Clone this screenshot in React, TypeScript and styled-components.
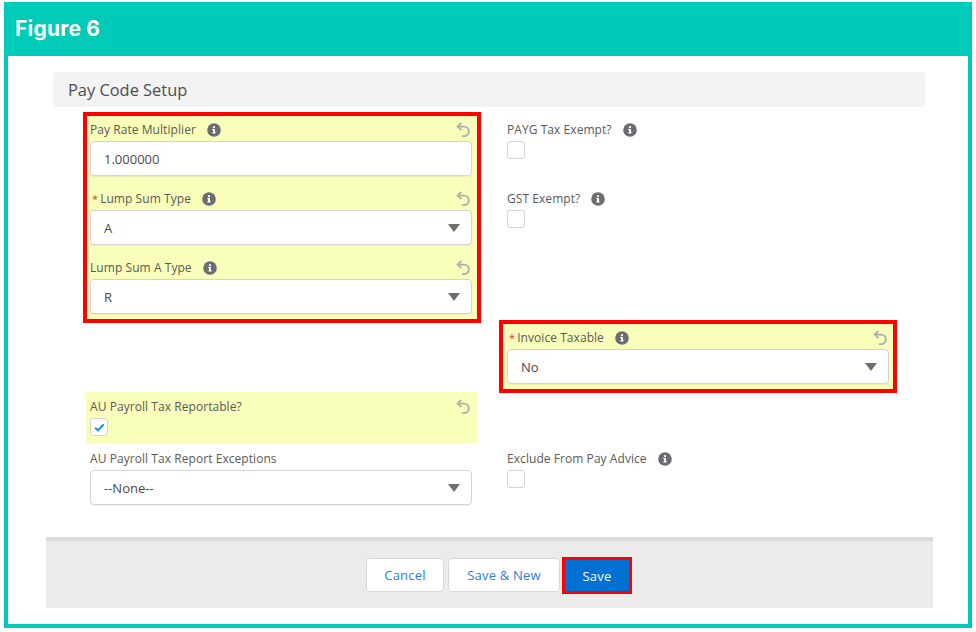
import styled, { createGlobalStyle } from 'styled-components'

const GlobalStyle = createGlobalStyle`
  html, body { margin: 0; padding: 0; background: #fff; }
  body { font-family: "Open Sans", "Liberation Sans", sans-serif; }
`

const Frame = styled.main`
  box-sizing: border-box;
  width: 968px; height: 626px;
  margin: 2px 0 0 4px;
  border: 4px solid #00cbb9;
  background: #fff;
`

const Banner = styled.header`
  box-sizing: border-box;
  height: 50px; padding: 0 0 6px 7px;
  display: flex; align-items: center;
  background: #00cbb9; color: #fff;
  font-family: Inter, "Liberation Sans", sans-serif;
  font-size: 21px; font-weight: 700; letter-spacing: 0.2px;
`

const SectionTitle = styled.h2`
  box-sizing: border-box;
  height: 35px; margin: 16px 43px 0 45px; padding: 0 15px;
  display: flex; align-items: center;
  background: #f3f3f3; border-radius: 4px;
  color: #4e4e4c; font-size: 16.4px; font-weight: 400;
`

const Columns = styled.div`
  display: flex; gap: 18px;
  margin: 5px 0 0 75px;
  height: 425px;
`

const Column = styled.div`
  width: 398px; flex: none;
  display: flex; flex-direction: column;
`

const RedBox = styled.section<{ $top?: number; $left: number; $right: number }>`
  box-sizing: border-box;
  margin-top: ${p => p.$top ?? 0}px;
  padding: 0 ${p => p.$right}px 5px ${p => p.$left}px;
  display: flex; flex-direction: column; gap: 9px;
  border: 4px solid #f00;
  background: #f9feba;
`

const Changed = styled.section`
  margin: 69px 4px 0 3px; padding: 0 5px 0 4px;
  height: 52px;
  background: #f9feba;
`

const Field = styled.div<{ $top?: number; $left?: number; $right?: number }>`
  margin-top: ${p => p.$top ?? 0}px;
  padding: 0 ${p => p.$right ?? 0}px 0 ${p => p.$left ?? 0}px;
`

const LabelRow = styled.div`
  box-sizing: border-box;
  height: 26px; padding-top: 3px;
  display: flex; align-items: center; gap: 11px;
  color: #5a5a58;
  font-size: 12px; line-height: 22px; letter-spacing: 0.06px;
`

const TightRow = styled(LabelRow)`
  height: 25px;
`

const Required = styled.span`
  color: #e8342c; margin: 0 2px; font-size: 11px;
`

const LabelText = styled.span`
  white-space: nowrap;
`

const UndoSlot = styled.span`
  margin-left: auto; margin-right: 2px;
  display: flex;
`

const Control = styled.div`
  box-sizing: border-box;
  height: 35px; padding: 0 11px 0 13px;
  display: flex; align-items: center; justify-content: space-between;
  background: #fff;
  border: 1px solid #d4d4d2; border-radius: 4px;
  box-shadow: 0 1px 1px rgba(0, 0, 0, 0.06);
  color: #4a4a48; font-size: 13px;
`

const Check = styled.span`
  box-sizing: border-box;
  width: 18px; height: 18px;
  display: flex; align-items: center; justify-content: center;
  background: #fff;
  border: 1px solid #d4d4d2; border-radius: 3px;
`

const Footer = styled.footer`
  box-sizing: border-box;
  height: 71px; margin: 0 35px 0 38px; padding: 17px 0 0 19px;
  display: flex; justify-content: center; align-items: flex-start;
  background: #ecebea;
  border-top: 4px solid #dddbda;
`

const Button = styled.button<{ $w: number }>`
  box-sizing: border-box;
  width: ${p => p.$w}px; height: 34px; margin: 0 4px 0 0; padding: 0;
  background: #fff;
  border: 1px solid #d8d8d6; border-radius: 4px;
  color: #2a7fd6; font: 400 13px "Open Sans", "Liberation Sans", sans-serif;
  letter-spacing: 0.2px;
`

const SaveButton = styled.button`
  box-sizing: border-box;
  width: 70px; height: 37px; margin: -1px 0 0 -2px; padding: 0;
  background: #0070d2;
  border: 3px solid #f00;
  color: #fff; font: 400 13px "Open Sans", "Liberation Sans", sans-serif;
  letter-spacing: 0.2px;
`

const InfoIcon = () => (
  <svg width="14" height="14" viewBox="0 0 14 14" aria-hidden="true">
    <circle cx="7" cy="7" r="6.8" fill="#6b6d70" />
    <rect x="6" y="6" width="2" height="4.2" fill="#fff" />
    <rect x="5.2" y="9.4" width="3.6" height="1" fill="#fff" />
    <rect x="5.2" y="6" width="1.5" height="1" fill="#fff" />
    <circle cx="7" cy="4.2" r="1.1" fill="#fff" />
  </svg>
)

const UndoIcon = () => (
  <svg width="14" height="16" viewBox="0 0 14 16" fill="none" stroke="#b0adab" strokeWidth="1.8" aria-hidden="true">
    <path d="M5.4 1 1.6 4.6l3.8 3.6" />
    <path d="M2 4.6h6a4.7 4.7 0 0 1 0 9.6H6" />
  </svg>
)

const Caret = () => (
  <svg width="12" height="8" viewBox="0 0 12 8" aria-hidden="true">
    <path d="M0 0h12L6 8z" fill="#706e6b" />
  </svg>
)

const Tick = () => (
  <svg width="11" height="9" viewBox="0 0 11 9" fill="none" stroke="#1589ee" strokeWidth="2" aria-hidden="true">
    <path d="M1.2 4.8 4 7.4 9.6 1.4" />
  </svg>
)

type LabelProps = { text: string; required?: boolean; info?: boolean; undo?: boolean }

const Label = ({ text, required, info, undo }: LabelProps) => (
  <TightRow>
    <LabelText>
      {required && <Required>*</Required>}
      {text}
    </LabelText>
    {info && <InfoIcon />}
    {undo && (
      <UndoSlot>
        <UndoIcon />
      </UndoSlot>
    )}
  </TightRow>
)

const Select = ({ value }: { value: string }) => (
  <Control>
    {value}
    <Caret />
  </Control>
)

export default function App() {
  return (
    <>
      <GlobalStyle />
      <Frame>
        <Banner>Figure 6</Banner>
        <SectionTitle>Pay Code Setup</SectionTitle>
        <Columns>
          <Column>
            <RedBox $left={3} $right={5}>
              <Field>
                <Label text="Pay Rate Multiplier" info undo />
                <Control>1.000000</Control>
              </Field>
              <Field>
                <Label text="Lump Sum Type" required info undo />
                <Select value="A" />
              </Field>
              <Field>
                <Label text="Lump Sum A Type" info undo />
                <Select value="R" />
              </Field>
            </RedBox>
            <Changed>
              <LabelRow>
                <LabelText>AU Payroll Tax Reportable?</LabelText>
                <UndoSlot>
                  <UndoIcon />
                </UndoSlot>
              </LabelRow>
              <Check>
                <Tick />
              </Check>
            </Changed>
            <Field $left={7} $right={9}>
              <LabelRow>
                <LabelText>AU Payroll Tax Report Exceptions</LabelText>
              </LabelRow>
              <Select value="--None--" />
            </Field>
          </Column>
          <Column>
            <Field $left={8} $right={8} $top={4}>
              <Label text="PAYG Tax Exempt?" info />
              <Check />
            </Field>
            <Field $left={8} $right={8} $top={26}>
              <Label text="GST Exempt?" info />
              <Check />
            </Field>
            <RedBox $left={4} $right={4} $top={92}>
              <Field>
                <Label text="Invoice Taxable" required info undo />
                <Select value="No" />
              </Field>
            </RedBox>
            <Field $left={8} $right={8} $top={51}>
              <LabelRow>
                <LabelText>Exclude From Pay Advice</LabelText>
                <InfoIcon />
              </LabelRow>
              <Check />
            </Field>
          </Column>
        </Columns>
        <Footer>
          <Button $w={78}>Cancel</Button>
          <Button $w={112}>Save &amp; New</Button>
          <SaveButton>Save</SaveButton>
        </Footer>
      </Frame>
    </>
  )
}
